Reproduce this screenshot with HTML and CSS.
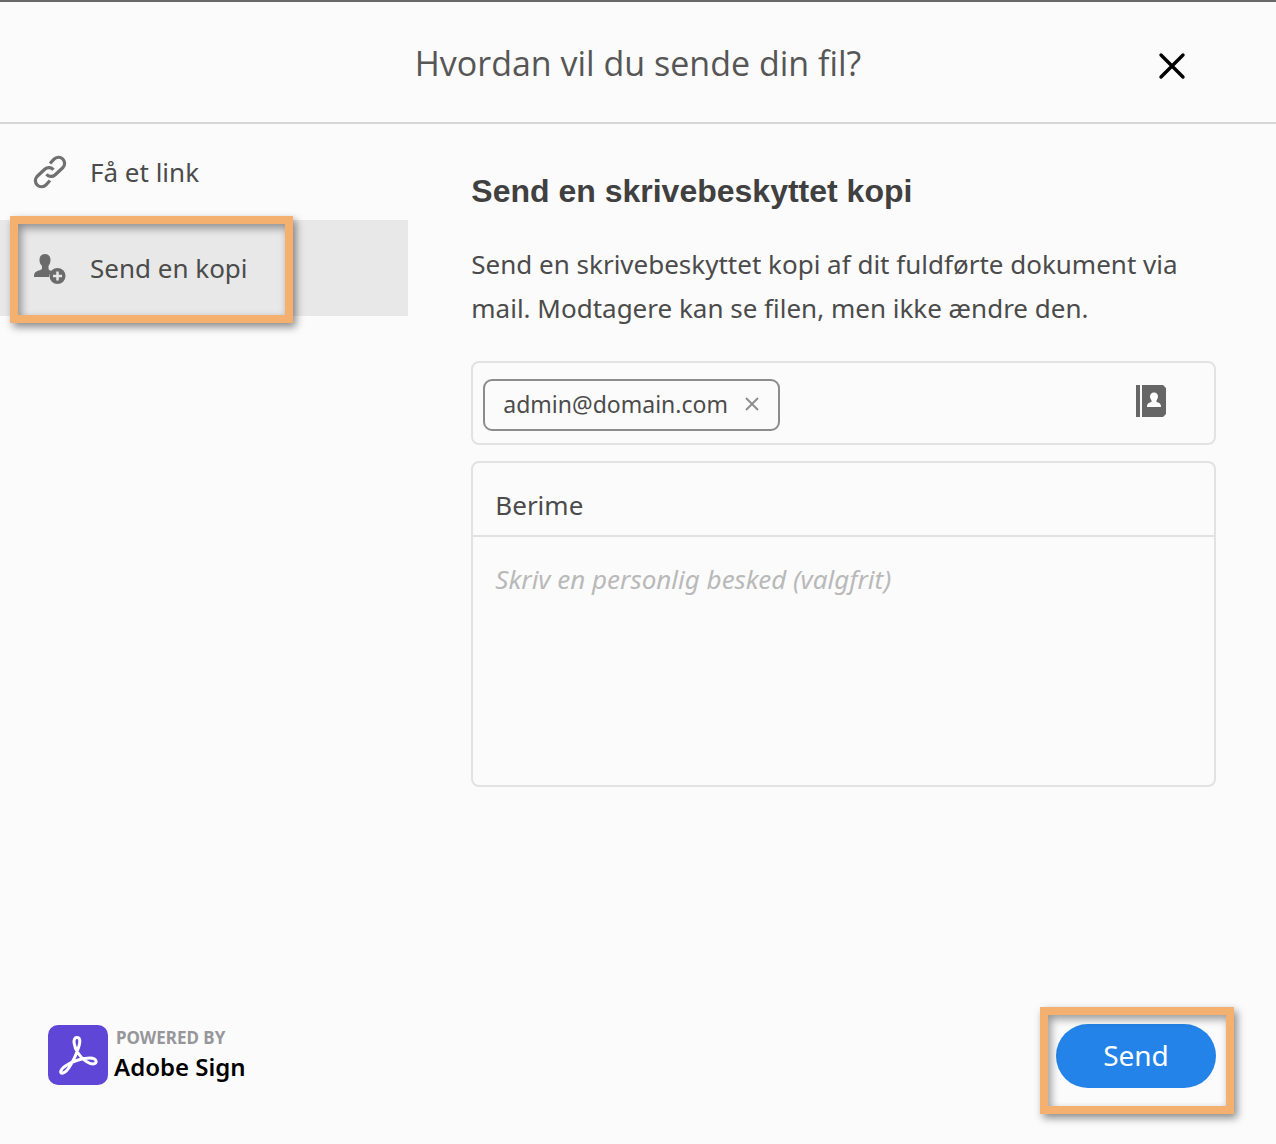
FILE: index.html
```html
<!DOCTYPE html>
<html lang="da">
<head>
  <meta charset="utf-8">
  <meta name="viewport" content="width=device-width, initial-scale=1">
  <title>Send din fil</title>
  <link rel="stylesheet" href="styles.css">
</head>
<body>
  <form class="dialog">
    <header class="dialog-header">
      <h1 class="dialog-title">Hvordan vil du sende din fil?</h1>
      <button class="close" type="button" aria-label="Luk">
        <svg width="28" height="28" viewBox="0 0 28 28" aria-hidden="true"><path d="M3 3 25 25M25 3 3 25" fill="none" stroke="#000" stroke-width="3.400" stroke-linecap="round"/></svg>
      </button>
    </header>

    <div class="dialog-body">
      <aside class="sidebar">
        <nav class="nav">
          <a class="nav-item" href="#link">
            <svg class="nav-icon" viewBox="0 0 34 34" aria-hidden="true">
              <g fill="none" stroke="#707070" stroke-width="3.200">
                <path d="M17 8.500 21 4.200a5.900 5.900 0 0 1 9 8.300L22 20a5.900 5.900 0 0 1-8.500-.8"/>
                <path d="M17 25.500 13 29.800a5.900 5.900 0 0 1-9-8.300L12 14a5.900 5.900 0 0 1 8.500.8"/>
              </g>
            </svg>
            Få et link
          </a>
          <a class="nav-item nav-item-active" href="#kopi" aria-current="page">
            <svg class="nav-icon" viewBox="0 0 34 34" aria-hidden="true">
              <path d="M12 3c3.500 0 5.500 2.500 5.500 6 0 2.500-1 4.500-2 6v2.500c0 1.500 1.500 2 3.500 3-2 1.500-3 3.200-3 5.500H1c0-5 2-5.500 5-6.500 2-.8 3-1 3-2.500v-2c-1.500-1.500-2.500-3.500-2.500-6C6.500 5.500 8.500 3 12 3z" fill="#6b6b6b"/>
              <circle cx="24.500" cy="25" r="8" fill="#6b6b6b"/>
              <path d="M24.500 20.500v9M20 25h9" stroke="#e8e8e8" stroke-width="2.500"/>
            </svg>
            Send en kopi
            <span class="callout callout-nav"></span>
          </a>
        </nav>
        <div class="brand">
          <svg class="brand-mark" viewBox="0 0 60 60" aria-hidden="true">
            <rect width="60" height="60" rx="10" fill="#5f46d6"/>
            <path d="M29 12.500C24 12.500 26 22 30 28C35 36 42 39 45 39C50 39 49 33 42 33C35 33 25 36 19 40C12 44 11 49 15 48C20 47 27 33 30 24C33 16 32 12.500 29 12.500Z" fill="none" stroke="#fff" stroke-width="3"/>
          </svg>
          <div class="brand-text">
            <span class="brand-powered">POWERED BY</span>
            <span class="brand-name">Adobe Sign</span>
          </div>
        </div>
      </aside>

      <main class="content">
        <h2 class="content-title">Send en skrivebeskyttet kopi</h2>
        <p class="content-text">Send en skrivebeskyttet kopi af dit fuldførte dokument via mail. Modtagere kan se filen, men ikke ændre den.</p>

        <div class="recipients">
          <span class="chip">
            admin@domain.com
            <button class="chip-remove" type="button" aria-label="Fjern">
              <svg width="16" height="16" viewBox="0 0 16 16" aria-hidden="true"><path d="M2 2 14 14M14 2 2 14" fill="none" stroke="#8e8e8e" stroke-width="2"/></svg>
            </button>
          </span>
          <button class="contacts" type="button" aria-label="Adressebog">
            <svg width="30" height="32" viewBox="0 0 30 32" aria-hidden="true">
              <path d="M0 0h4v32H0zM6 0h21l3 3v26l-3 3H6z" fill="#666"/>
              <path d="M18 7.500c2.500 0 4 1.800 4 4 0 1.500-.8 2.800-1.500 3.800v1.700c3 1 4.500 1.500 4.500 5H11c0-3.500 1.500-4 4.500-5v-1.700c-.8-1-1.500-2.300-1.500-3.800 0-2.200 1.500-4 4-4z" fill="#fff"/>
            </svg>
          </button>
        </div>

        <div class="message">
          <input class="subject" type="text" value="Berime" aria-label="Emne">
          <textarea class="note" placeholder="Skriv en personlig besked (valgfrit)" aria-label="Besked"></textarea>
        </div>

        <div class="actions">
          <div class="send-wrap">
            <button class="send" type="submit">Send</button>
            <span class="callout callout-send"></span>
          </div>
        </div>
      </main>
    </div>
  </form>
</body>
</html>
```
FILE: styles.css
```css
* {
  box-sizing: border-box;
}

body {
  margin: 0;
  background: #fbfbfb;
  color: #4b4b4b;
  font-family: "Noto Sans", "Open Sans", sans-serif;
  font-size: 26px;
}

button,
input,
textarea {
  font: inherit;
  color: inherit;
}

button {
  padding: 0;
  border: 0;
  background: none;
  cursor: pointer;
}

button svg {
  display: block;
}

.dialog {
  display: flex;
  flex-direction: column;
  min-height: 100vh;
  border-top: 2px solid #696969;
}

.dialog-header {
  display: grid;
  grid-template-columns: 1fr auto 1fr;
  align-items: center;
  padding: 36px 90px 34px;
  border-bottom: 2px solid #d6d6d6;
}

.dialog-title {
  grid-column: 2;
  margin: 0;
  color: #565656;
  font-family: "Open Sans", "Noto Sans", sans-serif;
  font-size: 34px;
  font-weight: 400;
  line-height: 50px;
}

.close {
  justify-self: end;
  padding-top: 6px;
}

.dialog-body {
  display: flex;
  flex: 1;
}

.sidebar {
  display: flex;
  flex-direction: column;
  justify-content: space-between;
  width: 32%;
}

.nav-item {
  position: relative;
  display: flex;
  align-items: center;
  gap: 23px;
  height: 96px;
  padding-left: 33px;
  color: inherit;
  text-decoration: none;
}

.nav-item-active {
  background: #e8e8e8;
}

.nav-icon {
  width: 34px;
  height: 34px;
}

.callout {
  position: absolute;
  border: 8px solid #f4b06f;
  box-shadow: 3px 4px 8px rgba(0, 0, 0, 0.45), inset 3px 4px 8px rgba(0, 0, 0, 0.4);
  pointer-events: none;
}

.callout-nav {
  top: -4px;
  left: 10px;
  width: 283px;
  height: 107px;
}

.brand {
  display: flex;
  gap: 6px;
  padding: 0 0 59px 48px;
}

.brand-mark {
  width: 60px;
  height: 60px;
}

.brand-text {
  display: flex;
  flex-direction: column;
  font-weight: 700;
}

.brand-powered {
  padding-left: 2px;
  color: #97979b;
  font-size: 17px;
  line-height: 25px;
}

.brand-name {
  color: #000;
  font-size: 24px;
  font-weight: 600;
  line-height: 34px;
}

.content {
  display: flex;
  flex: 1;
  flex-direction: column;
  padding: 48px 60px 56px 63px;
}

.content-title {
  margin: 0;
  color: #404040;
  font-family: "Liberation Sans", Arial, sans-serif;
  font-size: 32px;
  line-height: 38px;
}

.content-text {
  margin: 32px 0 31px;
  line-height: 44px;
}

.recipients {
  display: flex;
  align-items: flex-start;
  justify-content: space-between;
  padding: 16px 48px 12px 10px;
  border: 2px solid #e2e2e2;
  border-radius: 8px;
}

.chip {
  display: flex;
  align-items: center;
  gap: 16px;
  height: 52px;
  padding: 0 18px 2px;
  border: 2px solid #8c8c8c;
  border-radius: 9px;
  font-size: 23px;
}

.contacts {
  padding-top: 6px;
}

.message {
  display: flex;
  flex-direction: column;
  margin-top: 16px;
  border: 2px solid #e2e2e2;
  border-radius: 8px;
}

.subject {
  height: 74px;
  padding: 12px 22px 0;
  border: 0;
  border-bottom: 2px solid #e2e2e2;
  background: none;
}

.note {
  height: 248px;
  padding: 24px 22px;
  border: 0;
  background: none;
  line-height: 36px;
  resize: none;
}

.note::placeholder {
  color: #b9b9b9;
  font-style: italic;
}

.actions {
  display: flex;
  justify-content: flex-end;
  margin-top: auto;
}

.send-wrap {
  position: relative;
}

.send {
  display: block;
  width: 160px;
  height: 64px;
  padding-bottom: 2px;
  border-radius: 32px;
  background: #2383e8;
  color: #fff;
  font-size: 28px;
}

.callout-send {
  top: -17px;
  left: -16px;
  width: 194px;
  height: 107px;
}
```
